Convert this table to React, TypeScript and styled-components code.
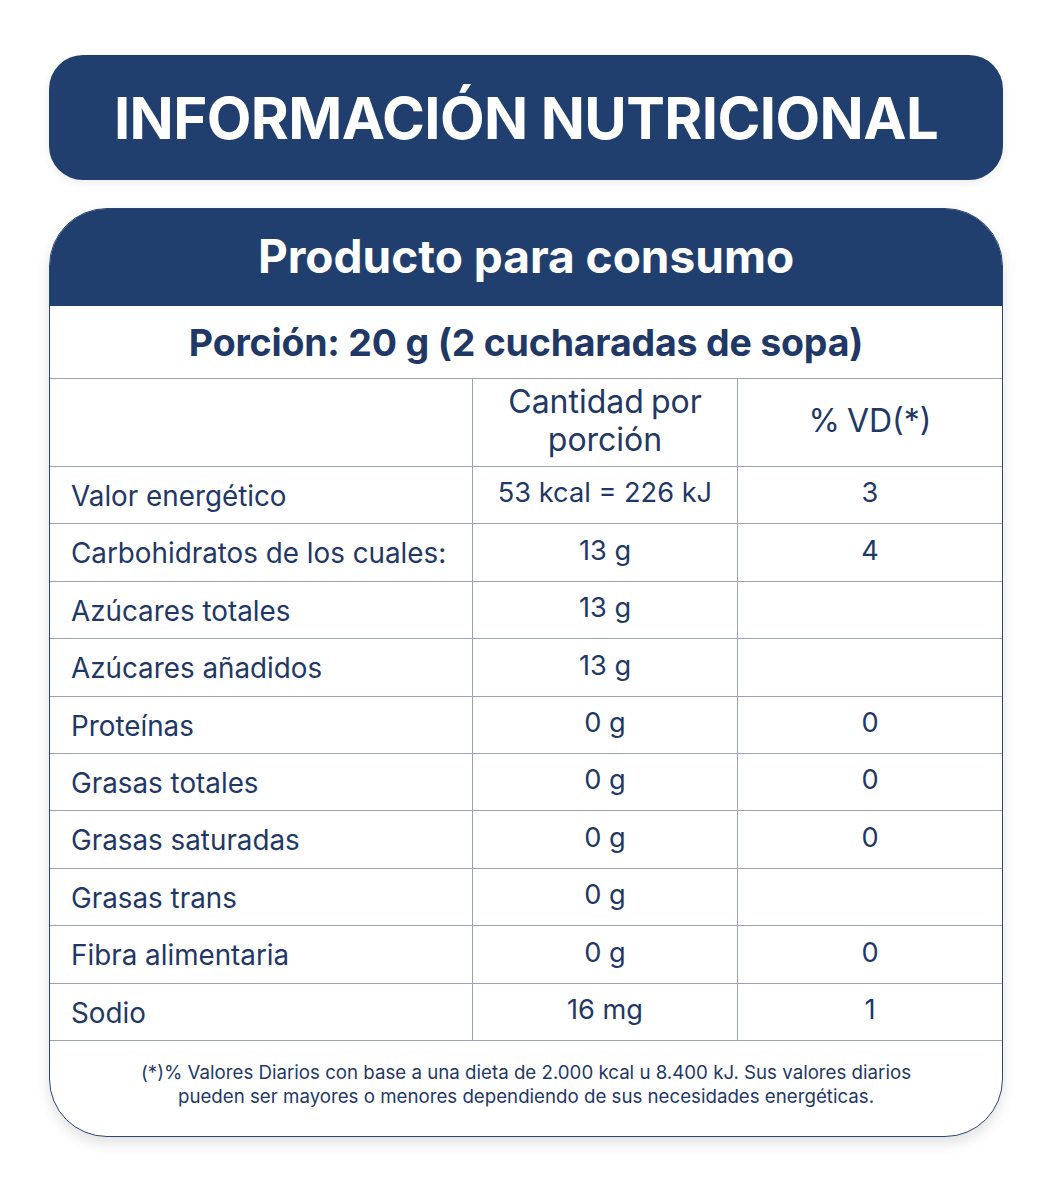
import React from "react";
import styled, { createGlobalStyle } from "styled-components";

const NAVY = "#213f6e";
const TEXT = "#1f3866";
const LINE = "#9aa2b4";

const Global = createGlobalStyle`
  html, body { margin: 0; padding: 0; background: #ffffff; }
  body { font-family: Inter, "Noto Sans", "Liberation Sans", sans-serif; }
  * { box-sizing: border-box; }
`;

const Page = styled.div`
  width: 1056px;
  padding: 55px 53px 60px 49px;
  display: flex;
  flex-direction: column;
  gap: 28px;
`;

const TitleBanner = styled.div`
  height: 125px;
  background: ${NAVY};
  border-radius: 34px;
  display: flex;
  align-items: center;
  justify-content: center;
  color: #ffffff;
  font-weight: 700;
  font-size: 58px;
  letter-spacing: -0.6px;
  box-shadow: 0 3px 8px rgba(0, 0, 0, 0.08);
`;

const Card = styled.div`
  border: 1.5px solid #2c4672;
  border-radius: 58px;
  overflow: hidden;
  background: #fff;
  box-shadow: 0 6px 14px rgba(0, 0, 0, 0.12);
`;

const CardHeader = styled.div`
  height: 97px;
  background: ${NAVY};
  color: #fff;
  font-weight: 700;
  font-size: 46px;
  display: flex;
  align-items: center;
  justify-content: center;
  padding-bottom: 4px;
`;

const Portion = styled.div`
  height: 73px;
  display: flex;
  align-items: center;
  justify-content: center;
  color: ${TEXT};
  font-weight: 700;
  font-size: 37.5px;
  letter-spacing: -0.2px;
  border-bottom: 1.5px solid ${LINE};
`;

const Table = styled.div`
  display: grid;
  grid-template-columns: 423px 265px 1fr;
`;

const Cell = styled.div<{ $head?: boolean; $align?: "left" | "center"; $col: number }>`
  height: ${(p) => (p.$head ? "88px" : "57.4px")};
  display: flex;
  align-items: center;
  justify-content: ${(p) => (p.$align === "left" ? "flex-start" : "center")};
  text-align: center;
  padding-left: ${(p) => (p.$align === "left" ? "21px" : "0")};
  padding-top: ${(p) => (p.$head ? "0" : p.$align === "left" ? "3px" : "0")};
  padding-bottom: ${(p) => (p.$head ? "4px" : p.$align === "left" ? "0" : "3px")};
  color: ${TEXT};
  font-size: ${(p) => (p.$head ? "32px" : p.$align === "left" ? "27.8px" : "27.2px")};
  word-spacing: ${(p) => (p.$head ? "-2px" : "0")};
  line-height: ${(p) => (p.$head ? "38px" : "1.2")};
  border-bottom: 1.5px solid ${LINE};
  border-right: ${(p) => (p.$col < 2 ? `1.5px solid ${LINE}` : "none")};
`;

const Footnote = styled.div`
  height: 95px;
  display: flex;
  align-items: flex-start;
  justify-content: center;
  text-align: center;
  padding-top: 20px;
  color: ${TEXT};
  font-size: 18.7px;
  line-height: 24px;
`;

const rows: [string, string, string][] = [
  ["Valor energético", "53 kcal = 226 kJ", "3"],
  ["Carbohidratos de los cuales:", "13 g", "4"],
  ["Azúcares totales", "13 g", ""],
  ["Azúcares añadidos", "13 g", ""],
  ["Proteínas", "0 g", "0"],
  ["Grasas totales", "0 g", "0"],
  ["Grasas saturadas", "0 g", "0"],
  ["Grasas trans", "0 g", ""],
  ["Fibra alimentaria", "0 g", "0"],
  ["Sodio", "16 mg", "1"],
];

export default function App() {
  return (
    <>
      <Global />
      <Page>
        <TitleBanner>INFORMACIÓN NUTRICIONAL</TitleBanner>
        <Card>
          <CardHeader>Producto para consumo</CardHeader>
          <Portion>Porción: 20 g (2 cucharadas de sopa)</Portion>
          <Table>
            <Cell $head $col={0} />
            <Cell $head $col={1}>
              Cantidad por
              <br />
              porción
            </Cell>
            <Cell $head $col={2}>% VD(*)</Cell>
            {rows.map((r) => (
              <React.Fragment key={r[0]}>
                <Cell $col={0} $align="left">{r[0]}</Cell>
                <Cell $col={1}>{r[1]}</Cell>
                <Cell $col={2}>{r[2]}</Cell>
              </React.Fragment>
            ))}
          </Table>
          <Footnote>
            (*)% Valores Diarios con base a una dieta de 2.000 kcal u 8.400 kJ. Sus valores diarios
            <br />
            pueden ser mayores o menores dependiendo de sus necesidades energéticas.
          </Footnote>
        </Card>
      </Page>
    </>
  );
}
